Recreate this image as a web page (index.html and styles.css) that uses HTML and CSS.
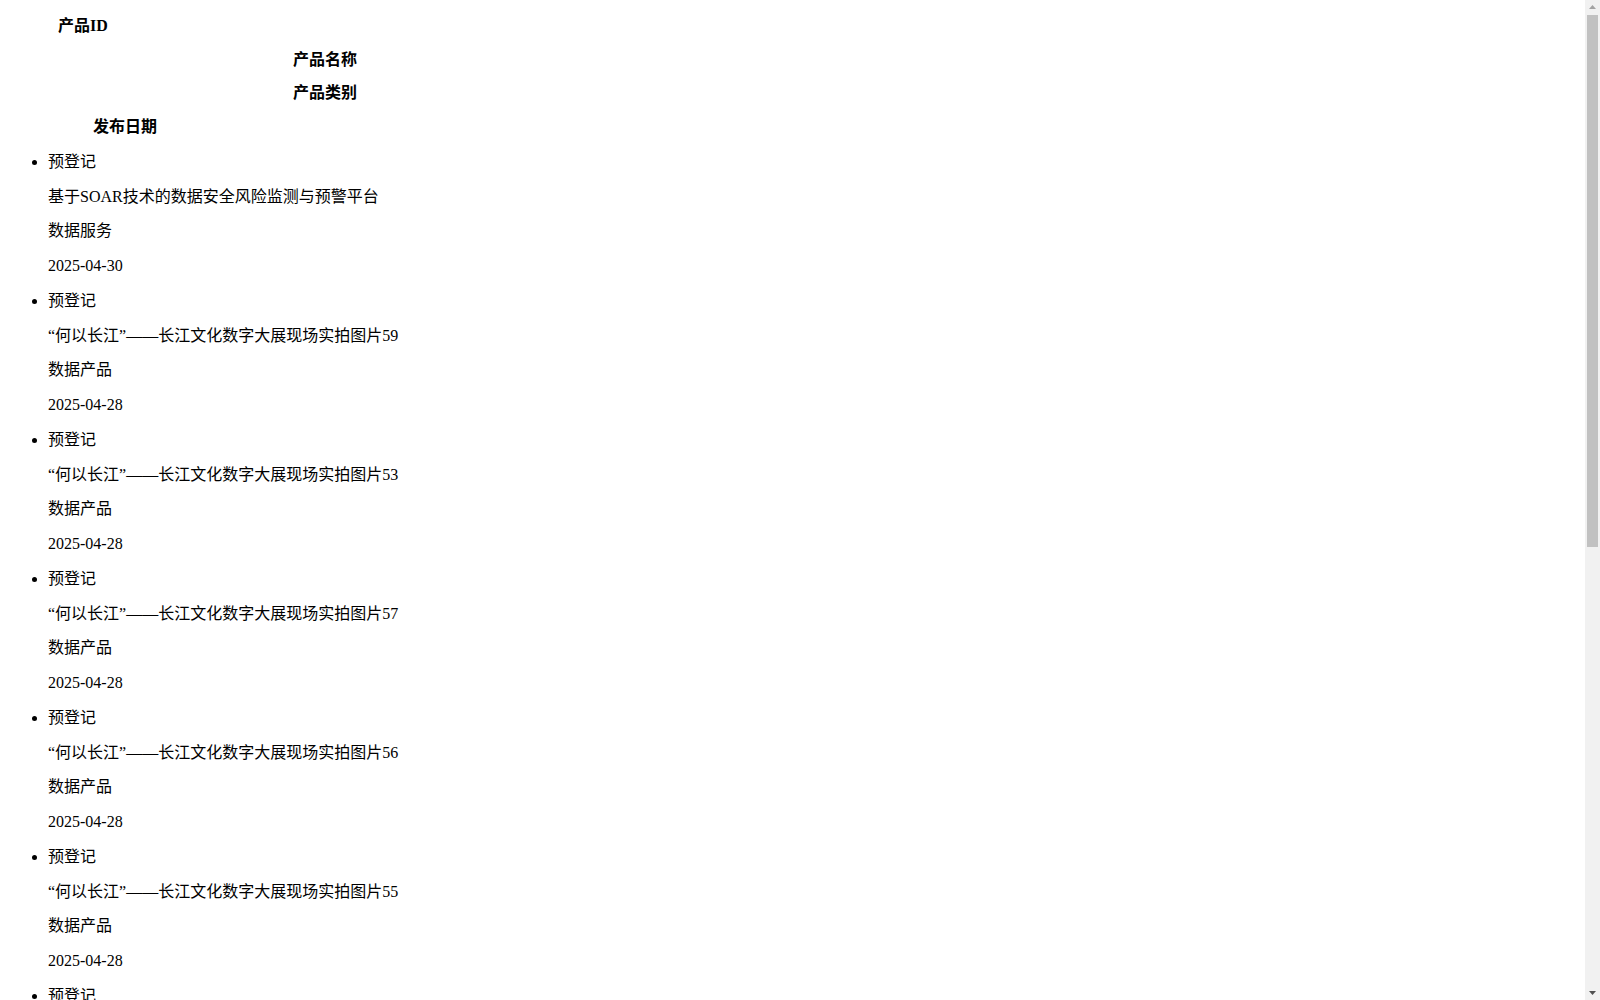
FILE: index.html
```html
<!DOCTYPE html>
<html lang="zh-CN">
<head>
<meta charset="utf-8">
<title>产品列表</title>
<link rel="stylesheet" href="styles.css">
</head>
<body>
<div class="head">
  <div class="h h-id">产品ID</div>
  <div class="h h-name">产品名称</div>
  <div class="h h-cat">产品类别</div>
  <div class="h h-date">发布日期</div>
</div>
<ul class="list">
  <li><div class="cell">预登记</div><div class="cell">基于SOAR技术的数据安全风险监测与预警平台</div><div class="cell">数据服务</div><div class="cell">2025-04-30</div></li>
  <li><div class="cell">预登记</div><div class="cell">“何以长江”——长江文化数字大展现场实拍图片59</div><div class="cell">数据产品</div><div class="cell">2025-04-28</div></li>
  <li><div class="cell">预登记</div><div class="cell">“何以长江”——长江文化数字大展现场实拍图片53</div><div class="cell">数据产品</div><div class="cell">2025-04-28</div></li>
  <li><div class="cell">预登记</div><div class="cell">“何以长江”——长江文化数字大展现场实拍图片57</div><div class="cell">数据产品</div><div class="cell">2025-04-28</div></li>
  <li><div class="cell">预登记</div><div class="cell">“何以长江”——长江文化数字大展现场实拍图片56</div><div class="cell">数据产品</div><div class="cell">2025-04-28</div></li>
  <li><div class="cell">预登记</div><div class="cell">“何以长江”——长江文化数字大展现场实拍图片55</div><div class="cell">数据产品</div><div class="cell">2025-04-28</div></li>
  <li><div class="cell">预登记</div><div class="cell">“何以长江”——长江文化数字大展现场实拍图片54</div><div class="cell">数据产品</div><div class="cell">2025-04-28</div></li>
  <li><div class="cell">预登记</div><div class="cell">“何以长江”——长江文化数字大展现场实拍图片58</div><div class="cell">数据产品</div><div class="cell">2025-04-28</div></li>
  <li><div class="cell">预登记</div><div class="cell">“何以长江”——长江文化数字大展现场实拍图片52</div><div class="cell">数据产品</div><div class="cell">2025-04-28</div></li>
  <li><div class="cell">预登记</div><div class="cell">“何以长江”——长江文化数字大展现场实拍图片51</div><div class="cell">数据产品</div><div class="cell">2025-04-28</div></li>
  <li><div class="cell">预登记</div><div class="cell">“何以长江”——长江文化数字大展现场实拍图片50</div><div class="cell">数据产品</div><div class="cell">2025-04-28</div></li>
  <li><div class="cell">预登记</div><div class="cell">“何以长江”——长江文化数字大展现场实拍图片49</div><div class="cell">数据产品</div><div class="cell">2025-04-28</div></li>
</ul>
<div class="scrollbar" aria-hidden="true">
  <svg class="arrow arrow-up" width="15" height="15" viewBox="0 0 15 15"><path d="M4 9 L7.5 5 L11 9 Z" fill="#a3a3a3"/></svg>
  <div class="track"><div class="thumb"></div></div>
  <svg class="arrow arrow-down" width="15" height="15" viewBox="0 0 15 15"><path d="M4 6 L11 6 L7.5 10 Z" fill="#505050"/></svg>
</div>
</body>
</html>
```

FILE: styles.css
```css
html {
  background: #fff;
}

body {
  margin: 8px;
  color: #000;
  font-family: "Liberation Serif", "Noto Sans CJK SC", serif;
  font-size: 16px;
}

.head {
  display: flex;
  flex-direction: column;
  align-items: flex-start;
  padding-top: 1px;
}

.h {
  font-weight: bold;
  line-height: 33.7px;
  height: 33.7px;
  text-align: center;
}

.h-id {
  width: 150px;
}

.h-name,
.h-cat {
  width: 634px;
}

.h-date {
  width: 234px;
}

.list {
  margin: 0;
  padding-top: 1px;
  padding-left: 40px;
  list-style: disc;
}

.cell {
  line-height: 34.75px;
  height: 34.75px;
  white-space: nowrap;
}

/* classic browser scrollbar drawn over the right edge */
.scrollbar {
  position: fixed;
  top: 0;
  right: 0;
  width: 15px;
  height: 100vh;
  background: #f1f1f1;
  display: flex;
  flex-direction: column;
}

.arrow {
  display: block;
  flex: none;
}

.track {
  flex: 1;
  padding: 0 2px;
}

.thumb {
  height: 532px;
  background: #c1c1c1;
}
```
